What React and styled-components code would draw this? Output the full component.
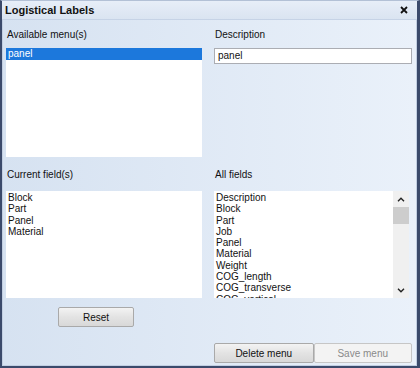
import React from "react";
import styled, { createGlobalStyle } from "styled-components";

const GlobalStyle = createGlobalStyle`
  html, body {
    margin: 0;
    padding: 0;
    background: #ffffff;
  }
  body {
    font-family: "Liberation Sans", Arial, sans-serif;
  }
`;

const Window = styled.div`
  width: 420px;
  height: 368px;
  box-sizing: border-box;
  border-left: 2px solid #3b4a6b;
  border-right: 3px solid #3b4a6b;
  border-bottom: 2px solid #3b4a6b;
  border-top: 1px solid #b3c1d6;
  background: linear-gradient(to right, #d6e2f1, #eaf1fa);
  box-shadow: inset 1px 0 0 #c2cfe2, inset -1px 0 0 #c2cfe2, inset 0 -1px 0 #c2cfe2;
  display: flex;
  flex-direction: column;
`;

const TitleBar = styled.div`
  height: 19px;
  box-sizing: border-box;
  padding: 0 9px 0 3px;
  display: flex;
  align-items: center;
  justify-content: space-between;
  background: linear-gradient(to bottom, #e7eef8, #dae4f1);
  border-bottom: 1px solid #c6d3e6;
  font-size: 11px;
  font-weight: bold;
  color: #111;
`;

const Body = styled.div`
  display: flex;
  gap: 12px;
  padding: 8px 0 0 4px;
`;

const Column = styled.div`
  display: flex;
  flex-direction: column;
  width: ${(p) => p.$width}px;
`;

const Label = styled.div`
  height: 14px;
  line-height: 14px;
  font-size: 10px;
  color: #111;
  margin-top: ${(p) => p.$top || 0}px;
  padding-left: 1px;
`;

const Cell = styled.div`
  height: ${(p) => p.$height}px;
  margin-top: ${(p) => p.$top || 0}px;
`;

const ListBox = styled.div`
  display: flex;
  background: #ffffff;
  height: ${(p) => p.$height}px;
  margin-top: ${(p) => p.$top || 0}px;
  width: ${(p) => p.$width || "auto"};
  overflow: hidden;
`;

const Items = styled.div`
  flex: 1;
  padding-top: 1px;
  overflow: hidden;
`;

const Item = styled.div`
  height: 11.3px;
  line-height: 11.3px;
  font-size: 10px;
  padding-left: 2px;
  white-space: nowrap;
  color: ${(p) => (p.$selected ? "#ffffff" : "#111")};
  background: ${(p) => (p.$selected ? "#1c78dc" : "transparent")};
  ${(p) => p.$selected && "height: 12px; line-height: 12px; margin-top: -1px;"}
`;

const Input = styled.div`
  height: 16px;
  box-sizing: border-box;
  border: 1px solid #abadb3;
  background: #ffffff;
  font-size: 10px;
  line-height: 14px;
  padding-left: 3px;
  color: #111;
`;

const Scrollbar = styled.div`
  width: 16px;
  background: #f0f0f0;
  display: flex;
  flex-direction: column;
  align-items: center;
`;

const Arrow = styled.div`
  height: 16px;
  width: 16px;
  display: flex;
  align-items: center;
  justify-content: center;
`;

const Track = styled.div`
  flex: 1;
  width: 16px;
`;

const Thumb = styled.div`
  height: 17px;
  width: 16px;
  background: #cdcdcd;
`;

const Button = styled.div`
  height: 20px;
  box-sizing: border-box;
  width: ${(p) => p.$width}px;
  border: 1px solid ${(p) => (p.$disabled ? "#c6c6c6" : "#a9a9a9")};
  border-radius: 2px;
  background: ${(p) =>
    p.$disabled
      ? "#f3f3f3"
      : "linear-gradient(to bottom, #f3f3f3, #e3e3e3 50%, #d8d8d8)"};
  color: ${(p) => (p.$disabled ? "#8a8a8a" : "#111")};
  font-size: 10px;
  display: flex;
  align-items: center;
  justify-content: center;
`;

const ButtonRow = styled.div`
  display: flex;
  margin-top: ${(p) => p.$top || 0}px;
  margin-left: ${(p) => p.$left || 0}px;
`;

const Close = () => (
  <svg width="8" height="8" viewBox="0 0 8 8">
    <path d="M1 1 L7 7 M7 1 L1 7" stroke="#111" strokeWidth="1.8" />
  </svg>
);

const Chevron = ({ up }) => (
  <svg width="8" height="5" viewBox="0 0 8 5">
    <path
      d={up ? "M1 4.2 L4 1.2 L7 4.2" : "M1 0.8 L4 3.8 L7 0.8"}
      stroke="#222"
      strokeWidth="1.4"
      fill="none"
    />
  </svg>
);

const currentFields = ["Block", "Part", "Panel", "Material"];
const allFields = [
  "Description",
  "Block",
  "Part",
  "Job",
  "Panel",
  "Material",
  "Weight",
  "COG_length",
  "COG_transverse",
  "COG_vertical",
];

const App = () => {
  return (
    <>
      <GlobalStyle />
      <Window>
        <TitleBar>
          <span>Logistical Labels</span>
          <Close />
        </TitleBar>
        <Body>
          <Column $width={196}>
            <Label>Available menu(s)</Label>
            <ListBox $top={6} $height={109}>
              <Items>
                <Item $selected>panel</Item>
              </Items>
            </ListBox>
            <Label $top={11}>Current field(s)</Label>
            <ListBox $top={9} $height={107}>
              <Items>
                {currentFields.map((f) => (
                  <Item key={f}>{f}</Item>
                ))}
              </Items>
            </ListBox>
            <ButtonRow $top={9} $left={52}>
              <Button $width={76}>Reset</Button>
            </ButtonRow>
          </Column>
          <Column $width={198}>
            <Label>Description</Label>
            <Cell $top={6} $height={109}>
              <Input>panel</Input>
            </Cell>
            <Label $top={11}>All fields</Label>
            <ListBox $top={9} $height={107} $width="195px">
              <Items>
                {allFields.map((f) => (
                  <Item key={f}>{f}</Item>
                ))}
              </Items>
              <Scrollbar>
                <Arrow>
                  <Chevron up />
                </Arrow>
                <Thumb />
                <Track />
                <Arrow>
                  <Chevron />
                </Arrow>
              </Scrollbar>
            </ListBox>
            <ButtonRow $top={45}>
              <Button $width={100}>Delete menu</Button>
              <Button $width={99} $disabled>
                Save menu
              </Button>
            </ButtonRow>
          </Column>
        </Body>
      </Window>
    </>
  );
};

export default App;
